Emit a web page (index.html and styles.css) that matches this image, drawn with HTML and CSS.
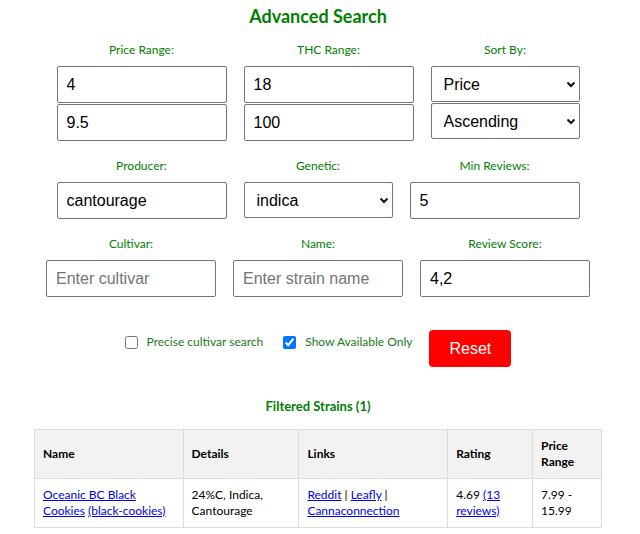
FILE: index.html
```html
<!DOCTYPE html>
<html>
<head>
<meta charset="utf-8">
<link rel="stylesheet" href="styles.css">
</head>
<body>
<div class="page">
  <h2 class="title">Advanced Search</h2>

  <div class="row">
    <div class="group">
      <label class="lbl">Price Range:</label>
      <div class="stack">
        <input class="field" type="text" value="4">
        <input class="field" type="text" value="9.5">
      </div>
    </div>
    <div class="group">
      <label class="lbl">THC Range:</label>
      <div class="stack">
        <input class="field" type="text" value="18">
        <input class="field" type="text" value="100">
      </div>
    </div>
    <div class="group">
      <label class="lbl">Sort By:</label>
      <div class="stack">
        <span class="selwrap">
          <select class="sel"><option>Price</option></select>
          <svg class="chev" width="10" height="7" viewBox="0 0 10 7"><path d="M1.5 1.5 L5 5 L8.5 1.5" fill="none" stroke="#111" stroke-width="2"/></svg>
        </span>
        <span class="selwrap">
          <select class="sel"><option>Ascending</option></select>
          <svg class="chev" width="10" height="7" viewBox="0 0 10 7"><path d="M1.5 1.5 L5 5 L8.5 1.5" fill="none" stroke="#111" stroke-width="2"/></svg>
        </span>
      </div>
    </div>
  </div>

  <div class="row row2">
    <div class="group">
      <label class="lbl">Producer:</label>
      <input class="field" type="text" value="cantourage">
    </div>
    <div class="group">
      <label class="lbl">Genetic:</label>
      <span class="selwrap">
        <select class="sel"><option>indica</option></select>
        <svg class="chev" width="10" height="7" viewBox="0 0 10 7"><path d="M1.5 1.5 L5 5 L8.5 1.5" fill="none" stroke="#111" stroke-width="2"/></svg>
      </span>
    </div>
    <div class="group">
      <label class="lbl">Min Reviews:</label>
      <input class="field" type="text" value="5">
    </div>
  </div>

  <div class="row row3">
    <div class="group">
      <label class="lbl">Cultivar:</label>
      <input class="field" type="text" placeholder="Enter cultivar">
    </div>
    <div class="group">
      <label class="lbl">Name:</label>
      <input class="field" type="text" placeholder="Enter strain name">
    </div>
    <div class="group">
      <label class="lbl">Review Score:</label>
      <input class="field" type="text" value="4,2">
    </div>
  </div>

  <div class="checks">
    <input class="cb" type="checkbox" id="precise">
    <label class="cblbl" for="precise">Precise cultivar search</label>
    <input class="cb cb2" type="checkbox" id="avail" checked>
    <label class="cblbl" for="avail">Show Available Only</label>
    <button class="reset">Reset</button>
  </div>

  <h3 class="subtitle">Filtered Strains (1)</h3>

  <table class="results">
    <thead>
      <tr>
        <th class="c1">Name</th>
        <th class="c2">Details</th>
        <th class="c3">Links</th>
        <th class="c4">Rating</th>
        <th class="c5">Price Range</th>
      </tr>
    </thead>
    <tbody>
      <tr>
        <td><a href="#">Oceanic BC Black Cookies</a> <a href="#">(black-cookies)</a></td>
        <td>24%C, Indica, Cantourage</td>
        <td><a href="#">Reddit</a> | <a href="#">Leafly</a> | <a href="#">Cannaconnection</a></td>
        <td>4.69 <a href="#">(13 reviews)</a></td>
        <td>7.99 - 15.99</td>
      </tr>
    </tbody>
  </table>
</div>
</body>
</html>
```

FILE: styles.css
```css
body {
  margin: 0;
  background: #fff;
  font-family: Lato, "Noto Sans", sans-serif;
  font-size: 12px;
  color: #000;
}

.page {
  width: 636px;
  padding-top: 4px;
}

.title {
  margin: 0 0 14px;
  font-size: 18px;
  line-height: 24px;
  font-weight: bold;
  text-align: center;
  color: #008000;
}

.row {
  display: flex;
  justify-content: center;
  gap: 17px;
  margin-bottom: 17px;
}

.row2 {
  margin-bottom: 17px;
}

.row3 {
  margin-bottom: 33px;
}

.group {
  display: flex;
  flex-direction: column;
  align-items: center;
}

.lbl {
  font-size: 12px;
  line-height: 16px;
  margin-bottom: 8px;
  color: #008000;
}

.stack {
  display: flex;
  flex-direction: column;
  gap: 1px;
}

.field {
  box-sizing: border-box;
  width: 170px;
  height: 37px;
  margin: 0;
  padding: 0 9px;
  border: 1px solid #767676;
  border-radius: 2px;
  font-family: "Liberation Sans", Arial, sans-serif;
  font-size: 16px;
  color: #000;
  background: #fff;
}

.field::placeholder {
  color: #757575;
}

.selwrap {
  position: relative;
  display: block;
  width: 149px;
  height: 36px;
}

.sel {
  box-sizing: border-box;
  appearance: none;
  -webkit-appearance: none;
  width: 149px;
  height: 36px;
  margin: 0;
  padding: 0 12px;
  border: 1px solid #767676;
  border-radius: 2px;
  font-family: "Liberation Sans", Arial, sans-serif;
  font-size: 16px;
  color: #000;
  background: #fff;
}

.chev {
  position: absolute;
  right: 4px;
  top: 15px;
  pointer-events: none;
}

.checks {
  display: flex;
  justify-content: center;
  align-items: flex-start;
  height: 37px;
}

.cb {
  width: 13px;
  height: 13px;
  margin: 6px 9px 0 0;
}

.cb2 {
  margin-left: 20px;
}

.cblbl {
  margin-top: 4px;
  font-size: 12px;
  line-height: 16px;
  color: #1a7a1a;
}

.reset {
  box-sizing: border-box;
  width: 82px;
  height: 37px;
  margin-left: 17px;
  border: none;
  border-radius: 4px;
  background: #ff0000;
  color: #fff;
  font-family: "Liberation Sans", Arial, sans-serif;
  font-size: 16px;
}

.subtitle {
  margin: 30px 0 14px;
  font-size: 13px;
  line-height: 18px;
  font-weight: bold;
  text-align: center;
  color: #008000;
}

.results {
  width: 568px;
  margin: 0 auto;
  border-collapse: collapse;
  font-size: 12px;
  line-height: 16px;
}

.results th,
.results td {
  border: 1px solid #ddd;
  padding: 8px;
  text-align: left;
  vertical-align: middle;
}

.results th {
  background: #f2f2f2;
  font-weight: bold;
  height: 32px;
}

.results a {
  color: #0000ee;
}

.c1 { width: 132px; }
.c2 { width: 99px; }
.c3 { width: 132px; }
.c4 { width: 68px; }
.c5 { width: 52px; }
```
